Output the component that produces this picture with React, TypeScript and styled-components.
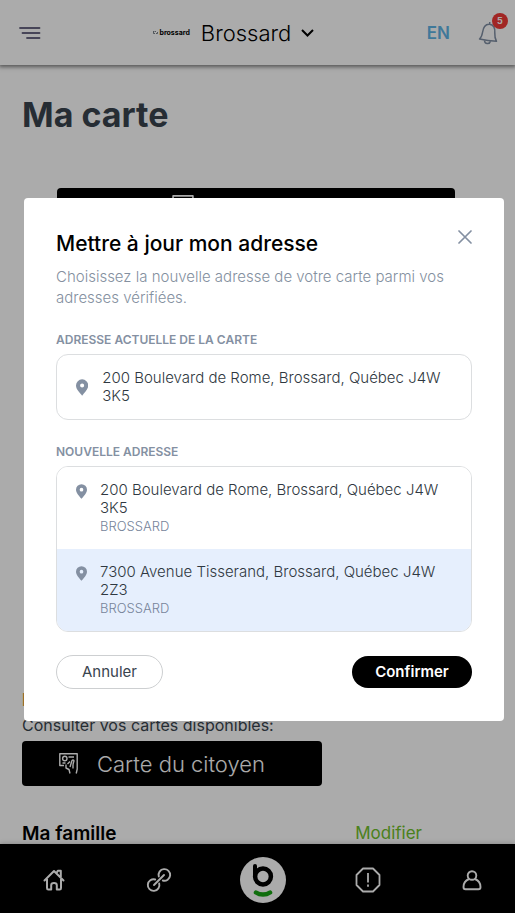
import React from "react";
import styled, { createGlobalStyle, css } from "styled-components";

const GlobalStyle = createGlobalStyle`
  * { box-sizing: border-box; }
  body { margin: 0; background: #fff; font-family: Inter, sans-serif; color: #000; }
  h1, h2, p { margin: 0; }
  button { font: inherit; border: 0; padding: 0; background: none; cursor: pointer; color: inherit; }
`;

const Page = styled.div`
  height: 100vh;
  display: flex;
  flex-direction: column;
  overflow: hidden;
`;

const Header = styled.header`
  flex: none;
  height: 65px;
  padding: 0 12px 0 19px;
  display: flex;
  justify-content: space-between;
  align-items: center;
  box-shadow: 0 1px 4px 1px rgba(0, 0, 0, 0.5);
  background: #fff;
`;

const MenuButton = styled.button`
  display: flex;
`;

const CityButton = styled.button`
  display: flex;
  align-items: center;
  font-size: 22px;
  line-height: 28px;
  font-weight: 300;
`;

const Logo = styled.span`
  display: flex;
  align-items: center;
  gap: 1px;
  margin-right: 11px;
  font-size: 7px;
  line-height: 8px;
  font-weight: 700;
`;

const CityName = styled.span`
  margin-right: 10px;
`;

const HeaderActions = styled.div`
  display: flex;
  align-items: center;
  gap: 28px;
`;

const LanguageLink = styled.a`
  color: #5fb4e5;
  font-size: 17px;
  line-height: 20px;
  font-weight: 600;
  text-decoration: none;
`;

const BellButton = styled.button`
  position: relative;
  display: flex;
  padding-right: 4px;
`;

const Badge = styled.span`
  position: absolute;
  top: -8px;
  right: -5px;
  width: 16px;
  height: 16px;
  border-radius: 50%;
  background: #f03a37;
  color: #fff;
  font-size: 9px;
  line-height: 16px;
  font-weight: 700;
  text-align: center;
`;

const Content = styled.main`
  flex: 1;
  min-height: 0;
  overflow: hidden;
  padding: 30px 22px 0;
`;

const Title = styled.h1`
  color: #39444e;
  font-size: 34px;
  line-height: 40px;
  font-weight: 700;
`;

const CardArea = styled.section`
  height: 553px;
  padding: 53px 38px 0 35px;
`;

const CardButton = styled.button<{ $wide?: boolean }>`
  display: flex;
  align-items: center;
  background: #000;
  color: #fff;
  border-radius: 4px;
  line-height: 28px;
  ${({ $wide }) =>
    $wide
      ? css`
          width: 100%;
          height: 38px;
          justify-content: center;
          gap: 28px;
          font-size: 20px;
          font-weight: 300;
        `
      : css`
          width: 300px;
          height: 45px;
          gap: 19px;
          padding-left: 37px;
          font-size: 22px;
          font-weight: 300;
        `}
`;

const SectionLabel = styled.p`
  color: #e0963a;
  font-size: 18px;
  line-height: 24px;
  font-weight: 700;
`;

const Available = styled.p`
  margin: 2px 0 4px;
  color: #39444e;
  font-size: 16px;
  line-height: 23px;
`;

const FamilyRow = styled.div`
  display: flex;
  justify-content: space-between;
  margin-top: 36px;
  padding-right: 71px;
`;

const FamilyTitle = styled.h2`
  font-size: 19px;
  line-height: 24px;
  font-weight: 600;
`;

const EditLink = styled.a`
  color: #6fc02c;
  font-size: 17px;
  line-height: 22px;
  text-decoration: none;
`;

const Nav = styled.nav`
  flex: none;
  height: 69px;
  padding: 3px 20px 0 31px;
  display: flex;
  justify-content: space-between;
  align-items: center;
  background: #000;
  color: #fff;
  box-shadow: 0 0 5px rgba(0, 0, 0, 0.25);
  z-index: 1;
`;

const NavLink = styled.a`
  display: flex;
  justify-content: center;
  align-items: center;
  width: 46px;
  color: inherit;
`;

const Backdrop = styled.div`
  position: fixed;
  inset: 0;
  z-index: 2;
  display: flex;
  align-items: center;
  padding: 6px 11px 0 24px;
  background: rgba(0, 0, 0, 0.33);
`;

const Dialog = styled.section`
  flex: 1;
  min-width: 0;
  padding: 32px;
  background: #fff;
  border-radius: 4px;
`;

const DialogHeader = styled.div`
  display: flex;
  justify-content: space-between;
  align-items: flex-start;
`;

const DialogTitle = styled.h2`
  font-size: 21px;
  line-height: 28px;
  font-weight: 500;
`;

const CloseButton = styled.button`
  display: flex;
`;

const Intro = styled.p`
  margin-top: 8px;
  color: #8490a0;
  font-size: 15px;
  line-height: 21px;
  font-weight: 300;
`;

const GroupLabel = styled.h2`
  margin: 24px 0 6px;
  color: #8490a2;
  font-size: 12px;
  line-height: 16px;
  font-weight: 600;
  text-transform: uppercase;
`;

const AddressBox = styled.div`
  border: 1px solid #dcdee0;
  border-radius: 12px;
  overflow: hidden;
  color: #2f3841;
  font-weight: 300;
`;

const AddressRow = styled.div`
  display: flex;
  align-items: center;
  gap: 14px;
  padding: 14px 20px 14px 19px;
  font-size: 15px;
  line-height: 18px;
`;

const AddressOption = styled.button<{ $selected?: boolean }>`
  display: flex;
  align-items: flex-start;
  gap: 13px;
  width: 100%;
  padding: 14px 20px 14px 19px;
  background: ${({ $selected }) => ($selected ? "#e6effd" : "#fff")};
  font-size: 15px;
  line-height: 18px;
  text-align: left;
`;

const PinSlot = styled.span`
  flex: none;
  display: flex;
  padding-top: 3px;
`;

const AddressText = styled.span`
  display: block;
`;

const City = styled.span`
  display: block;
  color: #76849a;
  font-size: 13px;
  text-transform: uppercase;
`;

const Actions = styled.div`
  display: flex;
  justify-content: space-between;
  align-items: center;
  margin-top: 23px;
`;

const ActionButton = styled.button<{ $primary?: boolean }>`
  width: ${({ $primary }) => ($primary ? "120px" : "107px")};
  height: ${({ $primary }) => ($primary ? "32px" : "34px")};
  border-radius: 17px;
  border: ${({ $primary }) => ($primary ? "0" : "1px solid #cdcfd1")};
  background: ${({ $primary }) => ($primary ? "#000" : "#fff")};
  color: ${({ $primary }) => ($primary ? "#fff" : "#39444e")};
  font-size: 15px;
  line-height: 20px;
  font-weight: ${({ $primary }) => ($primary ? 600 : 400)};
`;

const Pin = ({ size }: { size: number }) => (
  <svg width={size - 4} height={size} viewBox="0 0 12 16" aria-hidden="true">
    <path
      fill="#8490a2"
      fillRule="evenodd"
      d="M6 0a6 6 0 0 0-6 6c0 4 4 7.200 6 10 2-2.800 6-6 6-10a6 6 0 0 0-6-6Zm0 4a2 2 0 1 1 0 4 2 2 0 0 1 0-4Z"
    />
  </svg>
);

const CardIcon = ({ width = 19 }: { width?: number }) => (
  <svg width={width} height={width + 2} viewBox="0 0 19 21" fill="none" stroke="currentColor" strokeWidth="1.4" strokeLinejoin="round" aria-hidden="true">
    <path d="M5 12.500H.8V.8h17.400V12" />
    <circle cx="5.800" cy="5.500" r="2.200" />
    <path d="M9.500 4h5.500M3.500 10h3" />
    <path d="M7 11.500v3.500l3 1.500 1 4M11 14l2-6.500c1.500-1.200 2.500 0 1.500 2l-.5 2M18.200 12v4l-1 4.500M14 11.500v4M11 8.500l-2.500 2.500" />
  </svg>
);

export default function App() {
  return (
    <>
      <GlobalStyle />
      <Page>
        <Header>
          <MenuButton aria-label="Menu">
            <svg width="22" height="12" viewBox="0 0 22 12" fill="none" stroke="#6b6883" strokeWidth="1.8" strokeLinecap="round">
              <path d="M1 1h19.500M3.500 6h17M8 11h12.500" />
            </svg>
          </MenuButton>
          <CityButton>
            <Logo>
              <svg width="5" height="5" viewBox="0 0 5 5" fill="none" stroke="#57616a" strokeWidth=".8" aria-hidden="true">
                <path d="M.5 1v2.500h1.500M1.500 1.500h1.500M3 3.500h1.500V2" />
              </svg>
              brossard
            </Logo>
            <CityName>Brossard</CityName>
            <svg width="13" height="8" viewBox="0 0 13 8" fill="none" stroke="#000" strokeWidth="2" aria-hidden="true">
              <path d="m1 1 5.500 5.500L12 1" />
            </svg>
          </CityButton>
          <HeaderActions>
            <LanguageLink href="#en">EN</LanguageLink>
            <BellButton aria-label="Notifications">
              <svg width="21" height="24" viewBox="0 0 21 24" fill="none" stroke="#7f8ea3" strokeWidth="1.5" strokeLinejoin="round">
                <path d="M1.500 18c2-1.500 2.500-3.500 3-6.500C5.200 6.500 7 3 11.500 3.300c4.500.5 5.700 4 5.300 8.700-.2 3.500.2 5.500 1.700 8.300-5.500-.2-11.500-1-17-2.300ZM11.500 3.300l.3-2.300" />
                <path d="M6.500 19.500c.2 3.700 5 4.200 6 .8" />
              </svg>
              <Badge>5</Badge>
            </BellButton>
          </HeaderActions>
        </Header>

        <Content>
          <Title>Ma carte</Title>
          <CardArea>
            <CardButton $wide>
              <CardIcon width={22} />
              Mettre à jour
            </CardButton>
          </CardArea>
          <SectionLabel>Information</SectionLabel>
          <Available>Consulter vos cartes disponibles:</Available>
          <CardButton>
            <CardIcon />
            Carte du citoyen
          </CardButton>
          <FamilyRow>
            <FamilyTitle>Ma famille</FamilyTitle>
            <EditLink href="#modifier">Modifier</EditLink>
          </FamilyRow>
        </Content>

        <Nav>
          <NavLink href="#accueil" aria-label="Accueil">
            <svg width="22" height="22" viewBox="0 0 22 22" fill="none" stroke="currentColor" strokeWidth="2" strokeLinejoin="round" strokeLinecap="round">
              <path d="M1.500 11.500 11 2l9.500 9.500M4 10v9c0 1 .4 1.500 1.300 1.500h2.900v-4.300c0-3 5.600-3 5.600 0v4.300h2.900c.9 0 1.300-.5 1.300-1.500v-9M13.800 3.500l1-1.700h3V8" />
            </svg>
          </NavLink>
          <NavLink href="#liens" aria-label="Liens">
            <svg width="26" height="26" viewBox="0 0 26 26" fill="none" stroke="currentColor" strokeWidth="1.900" strokeLinecap="round">
              <path d="M8 18 18 8" />
              <path d="M12.800 9.500a5.800 5.800 0 1 1 4 4" />
              <path d="M9.200 12.500a5.800 5.800 0 1 0 4 4" />
            </svg>
          </NavLink>
          <NavLink href="#b-citi" aria-label="Menu principal">
            <svg width="46" height="46" viewBox="0 0 46 46" fill="none" strokeLinecap="round">
              <circle cx="23" cy="23" r="23" fill="#fff" />
              <path d="M15 9v10" stroke="#000" strokeWidth="4" />
              <circle cx="23" cy="19.500" r="7.900" stroke="#000" strokeWidth="4.500" />
              <path d="M16 35.500c4 2.800 10 2.800 14 0" stroke="#19a514" strokeWidth="4.500" />
            </svg>
          </NavLink>
          <NavLink href="#signaler" aria-label="Signaler">
            <svg width="26" height="26" viewBox="0 0 26 26" fill="none" stroke="currentColor" strokeWidth="1.800" strokeLinejoin="round">
              <path d="M8 1.500h10L24.500 8v10L18 24.500H8L1.500 18V8ZM13 6v9.500M13 17.500v2.300" />
            </svg>
          </NavLink>
          <NavLink href="#profil" aria-label="Profil">
            <svg width="20" height="22" viewBox="0 0 20 22" fill="none" stroke="currentColor" strokeWidth="1.900" strokeLinejoin="round">
              <circle cx="10" cy="6.500" r="4.300" />
              <path d="M7 10c-3.500 1.400-5.500 4.500-5.500 8 0 1.500.5 2.300 2 2.300h13c1.500 0 2-.8 2-2.300 0-3.500-2-6.600-5.500-8" />
            </svg>
          </NavLink>
        </Nav>
      </Page>

      <Backdrop>
        <Dialog role="dialog" aria-modal="true" aria-labelledby="dialog-title">
          <DialogHeader>
            <DialogTitle id="dialog-title">Mettre à jour mon adresse</DialogTitle>
            <CloseButton aria-label="Fermer">
              <svg width="14" height="14" viewBox="0 0 14 14" fill="none" stroke="#8490a2" strokeWidth="1.700" strokeLinecap="round">
                <path d="m1 1 12 12M13 1 1 13" />
              </svg>
            </CloseButton>
          </DialogHeader>
          <Intro>Choisissez la nouvelle adresse de votre carte parmi vos adresses vérifiées.</Intro>

          <GroupLabel>Adresse actuelle de la carte</GroupLabel>
          <AddressBox>
            <AddressRow>
              <Pin size={17} />
              <AddressText>200 Boulevard de Rome, Brossard, Québec J4W 3K5</AddressText>
            </AddressRow>
          </AddressBox>

          <GroupLabel>Nouvelle adresse</GroupLabel>
          <AddressBox>
            <AddressOption aria-pressed="false">
              <PinSlot><Pin size={15} /></PinSlot>
              <AddressText>
                200 Boulevard de Rome, Brossard, Québec J4W 3K5
                <City>Brossard</City>
              </AddressText>
            </AddressOption>
            <AddressOption $selected aria-pressed="true">
              <PinSlot><Pin size={15} /></PinSlot>
              <AddressText>
                7300 Avenue Tisserand, Brossard, Québec J4W 2Z3
                <City>Brossard</City>
              </AddressText>
            </AddressOption>
          </AddressBox>

          <Actions>
            <ActionButton>Annuler</ActionButton>
            <ActionButton $primary>Confirmer</ActionButton>
          </Actions>
        </Dialog>
      </Backdrop>
    </>
  );
}
